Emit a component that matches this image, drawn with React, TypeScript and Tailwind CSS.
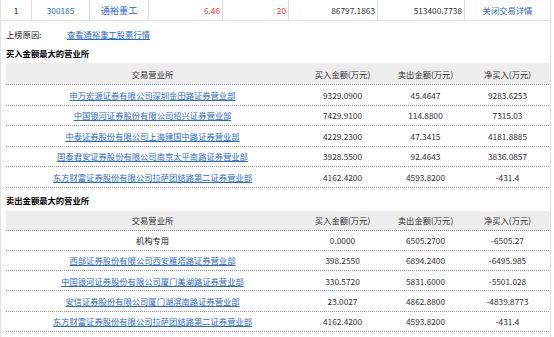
import React from "react";

const buyRows = [
  { name: "申万宏源证券有限公司深圳金田路证券营业部", buy: "9329.0900", sell: "45.4647", net: "9283.6253" },
  { name: "中国银河证券股份有限公司绍兴证券营业部", buy: "7429.9100", sell: "114.8800", net: "7315.03" },
  { name: "中泰证券股份有限公司上海建国中路证券营业部", buy: "4229.2300", sell: "47.3415", net: "4181.8885" },
  { name: "国泰君安证券股份有限公司南京太平南路证券营业部", buy: "3928.5500", sell: "92.4643", net: "3836.0857" },
  { name: "东方财富证券股份有限公司拉萨团结路第二证券营业部", buy: "4162.4200", sell: "4593.8200", net: "-431.4" },
];

const sellRows = [
  { name: "机构专用", buy: "0.0000", sell: "6505.2700", net: "-6505.27", plain: true },
  { name: "西部证券股份有限公司西安雁塔路证券营业部", buy: "398.2550", sell: "6894.2400", net: "-6495.985" },
  { name: "中国银河证券股份有限公司厦门美湖路证券营业部", buy: "330.5720", sell: "5831.6000", net: "-5501.028" },
  { name: "安信证券股份有限公司厦门湖滨南路证券营业部", buy: "23.0027", sell: "4862.8800", net: "-4839.8773" },
  { name: "东方财富证券股份有限公司拉萨团结路第二证券营业部", buy: "4162.4200", sell: "4593.8200", net: "-431.4" },
];

type Row = { name: string; buy: string; sell: string; net: string; plain?: boolean };

const cell = "flex items-center justify-center border-b border-dotted border-[#9a9a9a] mr-[1px]";

function Table({ rows, headerH, rowH }: { rows: Row[]; headerH: string; rowH: string }) {
  return (
    <div className="mx-[5px] w-[544px]">
      <div className={`grid grid-cols-[294px_86px_80px_84px] bg-[#ededed] text-[#333] ${headerH}`}>
        <div className={cell}>交易营业所</div>
        <div className={cell}>买入金额(万元)</div>
        <div className={cell}>卖出金额(万元)</div>
        <div className={cell}>净买入(万元)</div>
      </div>
      {rows.map((r, i) => (
        <div key={i} className={`grid grid-cols-[294px_86px_80px_84px] text-[#333] ${rowH}`}>
          <div className={cell}>
            {r.plain ? (
              <span className="text-[#222]">{r.name}</span>
            ) : (
              <span className="text-[#2c6ac6] underline underline-offset-[1px]">{r.name}</span>
            )}
          </div>
          <div className={cell}>{r.buy}</div>
          <div className={cell}>{r.sell}</div>
          <div className={cell}>{r.net}</div>
        </div>
      ))}
    </div>
  );
}

export default function App() {
  return (
    <div className="w-[554px] h-[337px] overflow-hidden bg-white font-['Noto_Sans_CJK_SC','Noto_Sans',sans-serif] text-[8.3px] leading-[12px] text-[#222]">
      <div className="w-[551px] h-full border-l border-r border-[#dde3ea]">
        <div className="grid grid-cols-[31px_58px_59px_74px_66px_89px_87px_1fr] h-[21px] border-b border-[#d5e0ec] items-stretch">
          <div className="border-r border-[#d5e0ec] flex items-center justify-center text-[#222]">1</div>
          <div className="border-r border-[#d5e0ec] flex items-center justify-center text-[#2c6ac6]">300185</div>
          <div className="border-r border-[#d5e0ec] flex items-center justify-center text-[#2c6ac6] text-[9.2px]">通裕重工</div>
          <div className="border-r border-[#d5e0ec] flex items-center justify-end pr-[2px] text-[#ff3b3b]">6.46</div>
          <div className="border-r border-[#d5e0ec] flex items-center justify-end pr-[2px] text-[#ff3b3b]">20</div>
          <div className="border-r border-[#d5e0ec] flex items-center justify-end pr-[2px] text-[#333]">86797.1863</div>
          <div className="border-r border-[#d5e0ec] flex items-center justify-end pr-[2px] text-[#333]">513400.7738</div>
          <div className="flex items-center justify-center text-[#2c6ac6]">关闭交易详情</div>
        </div>

        <div className="mt-[7px] h-[12px] flex items-center px-[5px]">
          <span className="w-[61px] text-[#222]">上榜原因:</span>
          <span className="text-[#2c6ac6] underline underline-offset-[1px]">查看通裕重工股票行情</span>
        </div>

        <div className="mt-[7px] h-[12px] flex items-center px-[5px] font-bold text-black">
          买入金额最大的营业所
        </div>

        <div className="mt-[4px]">
          <Table rows={buyRows} headerH="h-[22px]" rowH="h-[20.5px]" />
        </div>

        <div className="mt-[6px] h-[12px] flex items-center px-[5px] font-bold text-black">
          卖出金额最大的营业所
        </div>

        <div className="mt-[5px]">
          <Table rows={sellRows} headerH="h-[20px]" rowH="h-[20.3px]" />
        </div>
      </div>
    </div>
  );
}
